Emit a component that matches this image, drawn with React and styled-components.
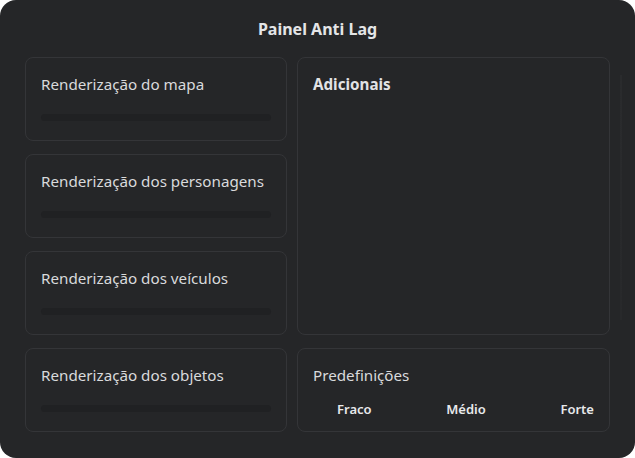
import React from "react";
import styled, { createGlobalStyle } from "styled-components";

const sliders = [
  "Renderização do mapa",
  "Renderização dos personagens",
  "Renderização dos veículos",
  "Renderização dos objetos",
];

const presets = ["Fraco", "Médio", "Forte"];

export default function App() {
  return (
    <>
      <Global />
      <Panel>
        <Title>Painel Anti Lag</Title>
        <Grid>
          {sliders.map((label) => (
            <Card key={label}>
              <Label>{label}</Label>
              <Track />
            </Card>
          ))}
          <Card $tall>
            <Label $bold>Adicionais</Label>
          </Card>
          <Card>
            <Label>Predefinições</Label>
            <Presets>
              {presets.map((p) => (
                <PresetButton key={p}>{p}</PresetButton>
              ))}
            </Presets>
          </Card>
        </Grid>
        <ScrollHint />
      </Panel>
    </>
  );
}

const Global = createGlobalStyle`
  body {
    margin: 0;
    background: #ffffff;
    font-family: "Noto Sans", "Open Sans", sans-serif;
  }
`;

const Panel = styled.div`
  position: relative;
  width: 635px;
  height: 458px;
  box-sizing: border-box;
  background: #252628;
  border-radius: 16px;
  padding: 17px 25px 0 25px;
  display: flex;
  flex-direction: column;
`;

const Title = styled.h1`
  margin: 0;
  height: 24px;
  line-height: 24px;
  text-align: center;
  font-size: 16px;
  font-weight: 700;
  color: #e4e5e7;
`;

const Grid = styled.div`
  margin-top: 16px;
  display: grid;
  grid-template-columns: 262px 313px;
  grid-template-rows: repeat(4, 84px);
  grid-auto-flow: column;
  column-gap: 10px;
  row-gap: 13px;
`;

const Card = styled.div`
  box-sizing: border-box;
  border: 1px solid #343538;
  border-radius: 8px;
  padding: 16px 15px 0 15px;
  display: flex;
  flex-direction: column;
  ${(p) => p.$tall && "grid-row: span 3;"}
`;

const Label = styled.div`
  font-size: 15.2px;
  line-height: 20px;
  font-weight: ${(p) => (p.$bold ? 700 : 400)};
  color: ${(p) => (p.$bold ? "#e2e3e5" : "#d9dadc")};
`;

const Track = styled.div`
  margin-top: 20px;
  height: 7px;
  border-radius: 4px;
  background: #202123;
`;

const Presets = styled.div`
  margin-top: 15px;
  padding-left: 24px;
  display: flex;
  justify-content: space-between;
`;

const PresetButton = styled.button`
  border: none;
  background: none;
  padding: 0;
  font-family: inherit;
  font-size: 13px;
  line-height: 18px;
  font-weight: 600;
  color: #e8e9eb;
  cursor: pointer;
`;

const ScrollHint = styled.div`
  position: absolute;
  top: 75px;
  right: 13px;
  width: 2px;
  height: 245px;
  background: linear-gradient(#2a2b2d, #28292b);
`;
